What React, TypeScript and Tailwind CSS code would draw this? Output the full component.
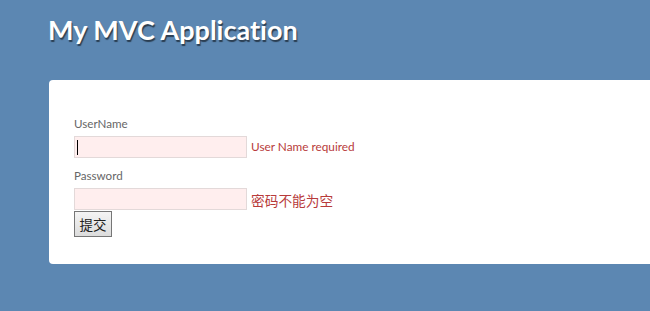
import React from "react";

export default function App() {
  return (
    <div className="min-h-[311px] w-[650px] overflow-hidden bg-[#5c87b2] font-['Lato','Noto_Sans_CJK_SC',sans-serif]">
      <div className="pl-[48px] pt-[13px] h-[80px]">
        <h1 className="font-['Lato',sans-serif] font-bold text-[27px] leading-[34px] text-white [font-variant-ligatures:none] [text-shadow:1px_2px_1px_rgba(0,0,0,0.55)]">
          My MVC Application
        </h1>
      </div>
      <div className="ml-[49px] w-[620px] rounded-l-[4px] bg-white pl-[25px] pt-[35px] pb-[27px]">
        <div className="text-[11.6px] leading-[18px] text-[#666]">UserName</div>
        <div className="mt-[3px] flex items-center">
          <div className="h-[22px] w-[173px] border border-[#e3d9d9] bg-[#ffeeee] flex items-center pl-[2px]">
            <div className="h-[15px] w-px bg-black" />
          </div>
          <span className="ml-[4px] text-[11.8px] text-[#b83b3b]">User Name required</span>
        </div>
        <div className="mt-[9px] text-[11.6px] leading-[18px] text-[#666]">Password</div>
        <div className="mt-[3px] flex items-center">
          <div className="h-[22px] w-[173px] border border-[#e3d9d9] bg-[#ffeeee]" />
          <span className="ml-[4px] mt-[2px] font-['Noto_Sans_CJK_SC',sans-serif] text-[13.7px] text-[#b83b3b]">密码不能为空</span>
        </div>
        <button className="block h-[26px] w-[38px] border border-[#767676] bg-gradient-to-b from-[#f4f4f4] to-[#dcdcdc] font-['Noto_Sans_CJK_SC',sans-serif] text-[13.5px] leading-[24px] text-[#222]">
          提交
        </button>
      </div>
    </div>
  );
}
